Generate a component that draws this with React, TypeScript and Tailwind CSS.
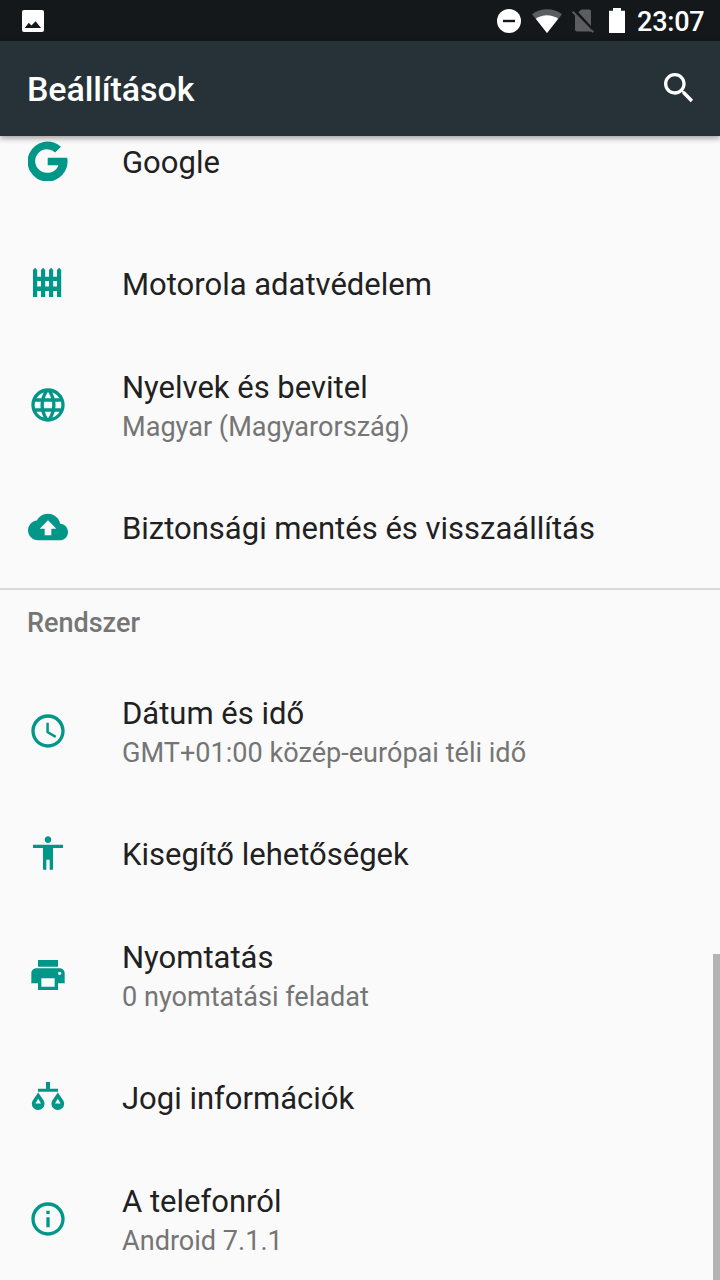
import React from 'react';

interface RowProps {
  icon: React.ReactNode;
  title: string;
  summary?: string;
}

const Icon: React.FC<{ children: React.ReactNode; viewBox?: string }> = ({ children, viewBox = '0 0 24 24' }) => (
  <svg viewBox={viewBox} className="w-10 h-10 shrink-0 fill-[#009688]">
    {children}
  </svg>
);

const SettingRow: React.FC<RowProps> = ({ icon, title, summary }) => (
  <li className="flex items-center h-[122px] px-7 shrink-0">
    {icon}
    <div className="ml-[54px] pt-1 whitespace-nowrap">
      <div className="text-[31px] leading-[40px] text-[#212121]">{title}</div>
      {summary && <div className="text-[27.1px] leading-[38px] text-[#757575]">{summary}</div>}
    </div>
  </li>
);

const GoogleIcon = () => (
  <Icon viewBox="1 0.5 40 40">
    <path d="M34 6.2A20 20 0 1 0 40.2 17.2H20.7V24.7H31.3C29.8 29.4 25.8 32.3 20.7 32.3A11.8 11.8 0 1 1 28.1 12Z" />
  </Icon>
);

const FenceIcon = () => (
  <Icon viewBox="1 0.5 40 40">
    <path d="M6 34.5V7.5L8.1 5.3L10.2 7.5V34.5ZM14 34.5V7.5L16.1 5.3L18.2 7.5V34.5ZM22 34.5V7.5L24.1 5.3L26.2 7.5V34.5ZM30 34.5V7.5L32.1 5.3L34.2 7.5V34.5Z" />
    <path d="M8 14.2H32V18.4H8ZM8 24H32V28.4H8Z" />
  </Icon>
);

const GlobeIcon = () => (
  <Icon>
    <path d="M11.99 2C6.47 2 2 6.48 2 12s4.47 10 9.99 10C17.52 22 22 17.52 22 12S17.52 2 11.99 2zm6.93 6h-2.95c-.32-1.25-.78-2.45-1.38-3.56 1.84.63 3.37 1.91 4.33 3.56zM12 4.04c.83 1.2 1.48 2.53 1.91 3.96h-3.82c.43-1.43 1.08-2.76 1.91-3.96zM4.26 14C4.1 13.36 4 12.69 4 12s.1-1.36.26-2h3.38c-.08.66-.14 1.32-.14 2 0 .68.06 1.34.14 2H4.26zm.82 2h2.95c.32 1.25.78 2.45 1.38 3.56-1.84-.63-3.37-1.9-4.33-3.56zm2.95-8H5.08c.96-1.66 2.49-2.93 4.33-3.56C8.81 5.55 8.35 6.75 8.03 8zM12 19.96c-.83-1.2-1.48-2.53-1.91-3.96h3.82c-.43 1.43-1.08 2.76-1.91 3.96zM14.34 14H9.66c-.09-.66-.16-1.32-.16-2 0-.68.07-1.35.16-2h4.68c.09.65.16 1.32.16 2 0 .68-.07 1.34-.16 2zm.25 5.56c.6-1.11 1.06-2.31 1.38-3.56h2.95c-.96 1.65-2.49 2.93-4.33 3.56zM16.36 14c.08-.66.14-1.32.14-2 0-.68-.06-1.34-.14-2h3.38c.16.64.26 1.31.26 2s-.1 1.36-.26 2h-3.38z" />
  </Icon>
);

const BackupIcon = () => (
  <Icon>
    <path d="M19.35 10.04C18.67 6.59 15.64 4 12 4 9.11 4 6.6 5.64 5.35 8.04 2.34 8.36 0 10.91 0 14c0 3.31 2.69 6 6 6h13c2.76 0 5-2.24 5-5 0-2.64-2.05-4.78-4.65-4.96zM14 13v4h-4v-4H7l5-5 5 5h-3z" />
  </Icon>
);

const ClockIcon = () => (
  <Icon>
    <path d="M11.99 2C6.47 2 2 6.48 2 12s4.47 10 9.99 10C17.52 22 22 17.52 22 12S17.52 2 11.99 2zM12 20c-4.42 0-8-3.58-8-8s3.58-8 8-8 8 3.58 8 8-3.58 8-8 8zm.5-13H11v6l5.25 3.15.75-1.23-4.5-2.67z" />
  </Icon>
);

const AccessibilityIcon = () => (
  <Icon>
    <path d="M12 2c1.1 0 2 .9 2 2s-.9 2-2 2-2-.9-2-2 .9-2 2-2zm9 7h-6v13h-2v-6h-2v6H9V9H3V7h18v2z" />
  </Icon>
);

const PrintIcon = () => (
  <Icon>
    <path d="M19 8H5c-1.66 0-3 1.34-3 3v6h4v4h12v-4h4v-6c0-1.66-1.34-3-3-3zm-3 11H8v-5h8v5zm3-7c-.55 0-1-.45-1-1s.45-1 1-1 1 .45 1 1-.45 1-1 1zm-1-9H6v4h12V3z" />
  </Icon>
);

const ScalesIcon = () => (
  <Icon viewBox="1 0.5 40 40">
    <path d="M19 5.5H23V12.3H31V15.2H11V12.3H19Z" />
    <path
      fillRule="evenodd"
      d="M11.2 16L16.2 23.2C19.6 28 16.2 33.5 11.2 33.5S2.8 28 6.2 23.2ZM11.2 22.2L8.4 27H14Z"
    />
    <path
      fillRule="evenodd"
      d="M30.8 16L35.8 23.2C39.2 28 35.8 33.5 30.8 33.5S22.4 28 25.8 23.2ZM30.8 22.2L28 27H33.6Z"
    />
  </Icon>
);

const InfoIcon = () => (
  <Icon>
    <path d="M11 17h2v-6h-2v6zm1-15C6.48 2 2 6.48 2 12s4.48 10 10 10 10-4.48 10-10S17.52 2 12 2zm0 18c-4.41 0-8-3.59-8-8s3.59-8 8-8 8 3.59 8 8-3.59 8-8 8zM11 9h2V7h-2v2z" />
  </Icon>
);

const StatusBar = () => (
  <div className="flex items-center h-[41px] pl-[22px] pr-4 bg-[#14181b] text-white">
    <svg viewBox="0 0 22 22" className="w-[22px] h-[22px]">
      <rect width="22" height="22" rx="2" fill="#fff" />
      <path d="M2.7 18L6.8 12.7L9.4 15.6L13.6 11.2L19 18Z" fill="#14181b" />
    </svg>
    <svg viewBox="0 0 24 24" className="ml-auto w-6 h-6">
      <circle cx="12" cy="12" r="12" fill="#fff" />
      <path d="M6 10.8H18V13.2H6Z" fill="#14181b" />
    </svg>
    <svg viewBox="0 0 30 24" className="ml-[11px] w-[30px] h-6">
      <path d="M15 24L0 5.2C8.5 -1.5 21.5 -1.5 30 5.2Z" fill="#5b5d5f" />
      <path d="M15 24L3.8 9.7C10 5 20 5 26.2 9.7Z" fill="#fff" />
    </svg>
    <svg viewBox="0 0 22 24" className="ml-[10px] w-[22px] h-6 fill-[#5b5d5f]">
      <path d="M6.4 3.3L8.6 1.1Q9.3 .5 10.2 .5H17.3Q19 .5 19 2.2V16.9Z" />
      <path d="M1.3 2.1L0 3.4L3 6.5V20.5Q3 22.5 5 22.5H18.5L20.7 23.7L22 22.5Z" />
      <path d="M2.6 2.2L20.6 20.8" stroke="#14181b" strokeWidth="1.2" />
    </svg>
    <svg viewBox="0 0 16 25" className="ml-[15px] w-4 h-[25px] fill-white">
      <path d="M4 0H12V2.7H16V25H0V2.7H4Z" />
    </svg>
    <span className="ml-3 w-[67px] text-[27px] leading-[41px] pt-1 font-medium tracking-[-0.2px] whitespace-nowrap">
      23:07
    </span>
  </div>
);

export default function App() {
  return (
    <div className="relative flex flex-col w-[720px] h-[1280px] overflow-hidden bg-[#fafafa] font-[Roboto,sans-serif]">
      <StatusBar />
      <header className="relative z-10 flex items-center justify-between h-[95px] shrink-0 pl-[27px] pr-[21px] bg-[#263238] text-white shadow-[0_2px_6px_rgba(0,0,0,0.4)]">
        <h1 className="text-[34px] leading-[40px] font-medium tracking-[-0.1px]">Beállítások</h1>
        <svg viewBox="0 0 24 24" className="mb-px w-10 h-10 fill-white">
          <path d="M15.5 14h-.79l-.28-.27C15.41 12.59 16 11.11 16 9.5 16 5.91 13.09 3 9.5 3S3 5.91 3 9.5 5.91 16 9.5 16c1.61 0 3.09-.59 4.23-1.57l.27.28v.79l5 4.99L20.49 19l-4.99-5zm-6 0C7.01 14 5 11.99 5 9.5S7.01 5 9.5 5 14 7.01 14 9.5 11.99 14 9.5 14z" />
        </svg>
      </header>

      <main className="flex-1 min-h-0 overflow-hidden">
        {/* First row is partly scrolled under the header */}
        <ul className="-mt-9">
          <SettingRow icon={<GoogleIcon />} title="Google" />
          <SettingRow icon={<FenceIcon />} title="Motorola adatvédelem" />
          <SettingRow icon={<GlobeIcon />} title="Nyelvek és bevitel" summary="Magyar (Magyarország)" />
          <SettingRow icon={<BackupIcon />} title="Biztonsági mentés és visszaállítás" />
        </ul>
        <section className="border-t-2 border-[#dadada]">
          <h2 className="h-20 pl-[27px] pt-[14px] text-[27px] leading-[38px] font-medium text-[#757575]">Rendszer</h2>
          <ul>
            <SettingRow icon={<ClockIcon />} title="Dátum és idő" summary="GMT+01:00 közép-európai téli idő" />
            <SettingRow icon={<AccessibilityIcon />} title="Kisegítő lehetőségek" />
            <SettingRow icon={<PrintIcon />} title="Nyomtatás" summary="0 nyomtatási feladat" />
            <SettingRow icon={<ScalesIcon />} title="Jogi információk" />
            <SettingRow icon={<InfoIcon />} title="A telefonról" summary="Android 7.1.1" />
          </ul>
        </section>
      </main>

      {/* Scrollbar thumb */}
      <div className="absolute right-0 bottom-0 w-[7px] h-[326px] bg-[#b3b3b3]" />
    </div>
  );
}
